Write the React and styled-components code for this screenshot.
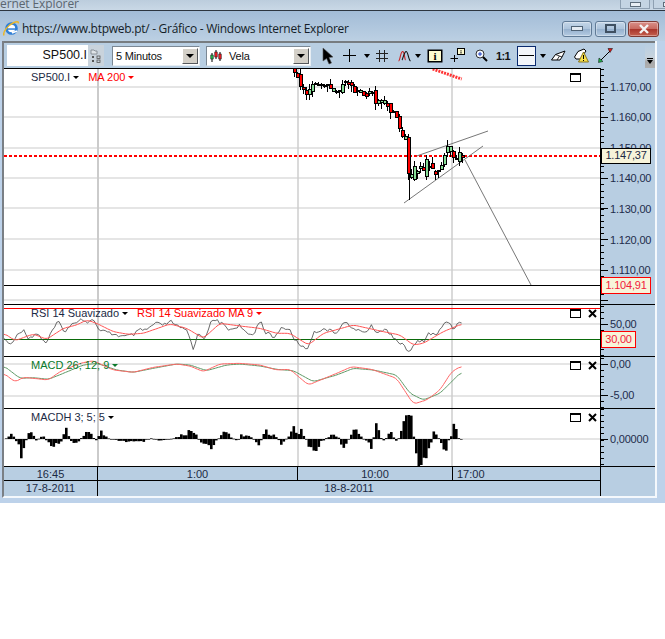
import styled, { createGlobalStyle } from 'styled-components'

const GlobalStyle = createGlobalStyle`
    html, body {
        margin: 0;
        padding: 0;
        background: #fff;
    }
`

const Page = styled.div`
    width: 665px;
    height: 639px;
    overflow: hidden;
    font-family: "Liberation Sans", Arial, sans-serif;
    color: #1b2a44;
`

const TopStrip = styled.div`
    height: 10px;
    display: flex;
    align-items: flex-start;
    overflow: hidden;
    background: linear-gradient(#bccddd, #c9d8e6);
`

const TopTitle = styled.div`
    font-family: "Open Sans", sans-serif;
    font-size: 12px;
    letter-spacing: -0.1px;
    line-height: 8px;
    color: #5b6670;
    flex: 1;
`

const TopButton = styled.div`
    width: 30px;
    height: 9px;
    flex: none;
    margin-right: ${p => p.$mr}px;
    box-sizing: border-box;
    border: 1px solid #8ea0b2;
    border-top: none;
    background: #c4d4e3;
    display: flex;
    justify-content: center;
    padding-top: 2px;

    &::after {
        content: "";
        width: 9px;
        height: 3px;
        border: 1px solid #5d6c7a;
        background: #e8eef4;
    }
`

const Window = styled.div`
    height: 492px;
    border-top: 1px solid #2c3540;
    background: #bdd2ea;
    display: flex;
    flex-direction: column;
`

const TitleBar = styled.div`
    height: 30px;
    box-sizing: border-box;
    display: flex;
    align-items: center;
    padding: 5px 6px 0 3px;
    background: linear-gradient(#a2bcd7, #bcd0e3);
`

const TitleText = styled.div`
    flex: 1;
    margin-left: 3px;
    font-family: "Open Sans", sans-serif;
    font-size: 12px;
    letter-spacing: -0.28px;
    color: #141d28;
    white-space: nowrap;
`

const WindowButton = styled.div`
    width: ${p => p.$w}px;
    height: 16px;
    margin-left: ${p => p.$ml}px;
    box-sizing: border-box;
    border: 1px solid ${p => (p.$red ? '#7d3a34' : '#5f7a96')};
    border-radius: 3px;
    background: ${p => (p.$red
        ? 'linear-gradient(#d9918a 0%, #c96a60 48%, #a8352b 52%, #c5604f 100%)'
        : 'linear-gradient(#c4d6e8 0%, #adc4dc 48%, #96b1ce 52%, #b4cbe2 100%)')};
    box-shadow: inset 0 0 0 1px rgba(255, 255, 255, 0.35);
    display: flex;
    align-items: center;
    justify-content: center;
`

const Content = styled.div`
    width: 655px;
    margin-left: 2px;
    box-sizing: border-box;
    border-left: 2px solid #7a7f85;
    border-right: 2px solid #f4f8fc;
    border-bottom: 2px solid #f4f8fc;
    display: flex;
    flex-direction: column;
`

const Toolbar = styled.div`
    height: 25px;
    border-top: 2px solid #777c80;
    background: #b8cee2;
    display: flex;
    align-items: center;
    padding-left: 3px;
`

const SearchBox = styled.div`
    width: 81px;
    height: 21px;
    box-sizing: border-box;
    background: #fff;
    font-size: 12.5px;
    line-height: 21px;
    text-align: right;
    padding-right: 1px;
    color: #111;
`

const SearchButton = styled.div`
    width: 16px;
    height: 21px;
    margin-right: 8px;
    background: #c9d3dc;
    display: flex;
    align-items: center;
    justify-content: center;
`

const Combo = styled.div`
    width: ${p => p.$w}px;
    height: 20px;
    margin-right: 6px;
    box-sizing: border-box;
    border: 1px solid #7b8894;
    border-right-color: #e6edf3;
    border-bottom-color: #e6edf3;
    background: #fff;
    display: flex;
    align-items: center;
    padding-left: 3px;
    font-size: 11px;
    letter-spacing: -0.2px;
    color: #111;
`

const ComboText = styled.span`
    flex: 1;
    margin-left: ${p => p.$ml || 0}px;
`

const ComboArrow = styled.div`
    width: 16px;
    height: 16px;
    margin-right: 1px;
    box-sizing: border-box;
    background: #d4d0c8;
    border: 1px solid;
    border-color: #fff #55585c #55585c #fff;
    display: flex;
    align-items: center;
    justify-content: center;

    &::after {
        content: "";
        border-left: 4px solid transparent;
        border-right: 4px solid transparent;
        border-top: 4px solid #000;
    }
`

const ToolSlot = styled.div`
    width: ${p => p.$w}px;
    margin-left: ${p => p.$ml || 0}px;
    height: 22px;
    flex: none;
    display: flex;
    align-items: center;
    justify-content: center;
`

const ToolChevron = styled.div`
    border-left: 3.5px solid transparent;
    border-right: 3.5px solid transparent;
    border-top: 4px solid #000;
`

const InfoBox = styled.div`
    width: 12px;
    height: 10px;
    border: 1px solid #000;
    box-shadow: 0 0 0 0.5px #000;
    background: #fdfbd0;
    font-family: "Liberation Serif", serif;
    font-weight: bold;
    font-size: 11px;
    line-height: 10px;
    text-align: center;
    color: #000;
`

const OneToOne = styled.span`
    font-size: 11px;
    font-weight: bold;
    letter-spacing: -0.6px;
    color: #111;
`

const LineBox = styled.div`
    width: 19px;
    height: 20px;
    margin-left: 5px;
    flex: none;
    box-sizing: border-box;
    border: 1px solid #0a2a6e;
    background: #f3f6fa;
    display: flex;
    align-items: center;
    justify-content: center;

    &::after {
        content: "";
        width: 15px;
        height: 1px;
        background: #000;
    }
`

const OverflowButton = styled.div`
    width: 10px;
    height: 24px;
    margin-left: auto;
    background: linear-gradient(#b8cee2 0%, #c7d3dd 55%, #a8a8a8 75%, #b0b0b0 100%);
    display: flex;
    flex-direction: column;
    align-items: center;
    justify-content: flex-end;
    padding-bottom: 4px;
    box-sizing: border-box;

    &::before {
        content: "";
        width: 6px;
        height: 1px;
        background: #000;
        margin-bottom: 1px;
    }

    &::after {
        content: "";
        border-left: 3px solid transparent;
        border-right: 3px solid transparent;
        border-top: 4px solid #000;
    }
`

const Pane = styled.div`
    height: ${p => p.$h}px;
    display: flex;
    box-sizing: border-box;
    border-top: ${p => (p.$line ? '1px solid #000' : 'none')};
`

const Plot = styled.div`
    width: 596px;
    flex: none;
    position: relative;
    box-sizing: border-box;
    background: #fff;
    border-top: ${p => (p.$line ? '1px solid #000' : 'none')};

    svg {
        display: block;
    }
`

const Legend = styled.div`
    position: absolute;
    left: 27px;
    top: 1px;
    display: flex;
    gap: ${p => p.$gap || 9}px;
    font-size: 11px;
    line-height: 14px;
    white-space: nowrap;
`

const LegendItem = styled.span`
    display: flex;
    align-items: center;
    gap: 3px;
    color: ${p => p.$color || '#1b2a44'};

    &::after {
        content: "";
        border-left: 3.5px solid transparent;
        border-right: 3.5px solid transparent;
        border-top: 3.5px solid ${p => p.$color || '#000'};
    }
`

const PaneIcons = styled.div`
    position: absolute;
    right: 3px;
    top: 4px;
    display: flex;
    gap: 7px;
`

const Axis = styled.div`
    flex: 1;
    position: relative;
    border-left: 1px solid #000;
    background: #b8cee2;
    font-size: 11px;
    letter-spacing: -0.2px;
    color: #1e2c4c;
`

const TickLayer = styled.svg`
    position: absolute;
    left: 0;
    top: 0;
    display: block;
`

const AxisLabels = styled.div`
    position: relative;
    padding: ${p => p.$top}px 0 0 9px;
    display: flex;
    flex-direction: column;
`

const AxisLabel = styled.div`
    height: ${p => p.$step}px;
    line-height: ${p => p.$step}px;
    white-space: nowrap;
`

const ValueTag = styled.div`
    position: absolute;
    left: 0;
    top: ${p => p.$top}px;
    width: ${p => p.$w}px;
    height: ${p => p.$h}px;
    box-sizing: border-box;
    border: ${p => (p.$red ? '1.5px solid #f00' : '1px solid #000')};
    background: #f7f4da;
    color: ${p => (p.$red ? '#f2203a' : '#1b2a44')};
    font-size: 11px;
    line-height: ${p => p.$h - 3}px;
    text-align: center;
    white-space: nowrap;
`

const ScaleRow = styled.div`
    height: 15px;
    display: flex;
    box-sizing: border-box;
    border-top: ${p => (p.$line ? '1px solid #000' : 'none')};
    background: #b8cee2;
    font-size: 11px;
    line-height: 14px;
`

const ScaleCells = styled.div`
    width: 596px;
    flex: none;
    display: flex;
    box-sizing: border-box;
    border-bottom: ${p => (p.$under ? '1px solid #000' : 'none')};
`

const ScaleCell = styled.div`
    width: ${p => p.$w}px;
    flex: ${p => (p.$w ? 'none' : 1)};
    box-sizing: border-box;
    border-right: ${p => (p.$sep ? '1px solid #000' : 'none')};
    text-align: ${p => (p.$left ? 'left' : 'center')};
    padding-left: ${p => (p.$left ? 4 : 0)}px;
`

const ScaleEnd = styled.div`
    flex: 1;
    border-left: 1px solid #000;
`

const interp = (pts, x) => {
    if (x <= pts[0][0]) return pts[0][1]
    for (let i = 1; i < pts.length; i++) {
        if (x <= pts[i][0]) {
            const [x0, y0] = pts[i - 1]
            const [x1, y1] = pts[i]
            return y0 + ((y1 - y0) * (x - x0)) / (x1 - x0)
        }
    }
    return pts[pts.length - 1][1]
}

const noise = (i) => {
    const v = Math.sin(i * 12.9898) * 43758.5453
    return v - Math.floor(v)
}

// zoomed crop coordinates back to page coordinates
const fromCrop = (pts, ox, oy) => pts.map(([x, y]) => [ox + x / 3, oy + y / 3])
const toPoints = (pts) => pts.map(([x, y]) => `${x.toFixed(1)},${y.toFixed(1)}`).join(' ')

// resample a hand read line, then soften it with a short moving average
const smooth = (pts, win = 2) => {
    const first = pts[0][0]
    const last = pts[pts.length - 1][0]
    const samples = []
    for (let x = first; x <= last; x += 1.5) samples.push([x, interp(pts, x)])
    return samples.map(([x], i) => {
        const part = samples.slice(Math.max(0, i - win), i + win + 1)
        return [x, part.reduce((sum, s) => sum + s[1], 0) / part.length]
    })
}

// same line with the small jagged moves of a raw indicator
const jagged = (pts, amount) => {
    const out = []
    let i = 0
    for (let x = pts[0][0]; x <= pts[pts.length - 1][0]; x += 2.2, i++) {
        out.push([x, interp(pts, x) + (noise(i + 3) - 0.5) * amount])
    }
    return out
}

const pricePath = fromCrop([
    [40, 30], [50, 45], [58, 78], [72, 95], [80, 108], [90, 80], [105, 75], [125, 70], [140, 75],
    [150, 85], [165, 90], [175, 95], [183, 65], [200, 65], [215, 75], [225, 95], [240, 95],
    [250, 105], [265, 100], [272, 90], [282, 110], [285, 135], [300, 120], [320, 130], [328, 155],
    [345, 160], [352, 175], [362, 230], [380, 232], [382, 340], [390, 360], [405, 320], [420, 330],
    [430, 345], [440, 300], [452, 325], [465, 345], [480, 330], [490, 290], [500, 265], [515, 275],
    [520, 305], [532, 285], [545, 285],
], 280, 60)

const rsiBlack = [
    ...fromCrop([
        [12, 115], [25, 130], [40, 130], [55, 95], [75, 92], [85, 115], [110, 100], [140, 130], [155, 95],
        [175, 65], [195, 95], [215, 75], [240, 55], [260, 65], [285, 60], [295, 90], [330, 100], [370, 110],
        [400, 105], [420, 90], [440, 90], [465, 70], [490, 75], [515, 65], [540, 85], [560, 90], [580, 145],
        [595, 100], [615, 115], [630, 70], [650, 60], [690, 90],
    ], 0, 300),
    ...fromCrop([
        [0, 75], [15, 100], [40, 105], [60, 58], [75, 95], [105, 115], [120, 85], [145, 85], [165, 120],
        [200, 150], [220, 100], [250, 85], [290, 100], [305, 70], [325, 70], [340, 90], [385, 95], [390, 75],
        [410, 95], [440, 90], [475, 125], [510, 155], [530, 125], [550, 125], [565, 100], [590, 105],
        [620, 60], [640, 85], [655, 68], [665, 72],
    ], 240, 300),
]

const rsiRed = [
    ...fromCrop([
        [12, 100], [45, 122], [100, 102], [140, 118], [190, 85], [230, 75], [260, 60], [290, 70], [340, 95],
        [385, 103], [430, 100], [510, 72], [560, 85], [610, 115], [660, 70],
    ], 0, 300),
    ...fromCrop([
        [0, 78], [60, 85], [110, 100], [150, 100], [205, 135], [250, 100], [340, 75], [430, 95], [480, 105],
        [520, 135], [550, 130], [610, 95], [665, 72],
    ], 240, 300),
]

const macdGreen = [
    ...fromCrop([
        [12, 198], [60, 235], [100, 233], [145, 238], [190, 220], [250, 195], [290, 190], [350, 210],
        [400, 217], [460, 205], [530, 192], [570, 195], [620, 212], [680, 195],
    ], 0, 300),
    ...fromCrop([
        [0, 192], [60, 198], [110, 208], [160, 212], [220, 245], [290, 225], [340, 205], [400, 210],
        [470, 225], [510, 280], [550, 300], [600, 280], [665, 215],
    ], 240, 300),
]

const macdRed = [
    ...fromCrop([
        [12, 220], [45, 246], [70, 232], [100, 235], [145, 240], [180, 215], [240, 190], [280, 182],
        [340, 210], [400, 217], [460, 202], [530, 192], [570, 198], [610, 215], [660, 192],
    ], 0, 300),
    ...fromCrop([
        [0, 190], [60, 195], [110, 210], [150, 208], [205, 255], [290, 220], [335, 200], [395, 208],
        [470, 235], [520, 312], [560, 300], [600, 270], [635, 215], [665, 198],
    ], 240, 300),
]

const histPath = [
    ...[
        [12, 0], [30, 15], [45, -5], [60, -40], [70, -15], [88, 25], [105, -5], [125, 10], [150, -25],
        [175, -20], [195, 28], [215, -18], [235, -3], [260, 22], [285, -5], [300, 20], [320, 3], [340, -3],
        [385, -8], [420, -10], [450, 3], [475, -6], [520, 3], [580, 30], [595, -10], [630, -22], [670, 20],
        [710, -7],
    ].map(([x, h]) => [x / 3, h / 3]),
    ...[
        [0, 10], [15, 15], [35, 0], [55, -18], [70, 28], [100, 12], [122, -15], [160, 30], [180, 25],
        [215, -40], [240, -10], [265, 10], [290, 10], [305, -25], [340, 25], [365, 3], [390, -25], [405, 35],
        [425, -8], [450, 20], [468, -10], [485, 40], [507, 80], [530, -68], [560, -48], [580, 25], [612, -35],
        [640, 40], [655, -5], [665, 0],
    ].map(([x, h]) => [240 + x / 3, h / 3]),
]

const buildCandles = () => {
    const out = []
    for (let x = 294, i = 0; x < 463; x += 3, i++) {
        const swing = x > 410 ? 9 : 5
        const close = interp(pricePath, x) + (noise(i + 21) - 0.5) * swing
        const open = interp(pricePath, x - 3) + (noise(i) - 0.5) * swing
        const top = Math.min(open, close)
        const bottom = Math.max(open, close)
        out.push({
            x: Math.round(x) + 0.5,
            top: Math.round(top) + 0.5,
            height: Math.max(Math.round(bottom - top), 1),
            high: top - noise(i + 50) * 6,
            low: bottom + noise(i + 90) * 7,
            up: close < open,
        })
    }
    return out
}

const candles = buildCandles()

const histBars = []
for (let x = 5, i = 0; x < 462; x += 2.5, i++) {
    const v = interp(histPath, x)
    histBars.push({ x, v: v * (0.55 + noise(i + 7) * 0.9) })
}

const GridLines = ({ top, height, rows }) => (
    <>
        {[98, 298, 452].map((x) => (
            <line key={x} x1={x} x2={x} y1={top} y2={top + height} stroke="#cbcbcb" strokeWidth={x === 98 ? 2 : 1.4} />
        ))}
        {rows.map((y) => (
            <line key={y} x1={4} x2={600} y1={y} y2={y} stroke="#cbcbcb" strokeWidth="1.2" />
        ))}
    </>
)

const ChartSvg = ({ top, height, children }) => (
    <svg width="596" height={height} viewBox={`4 ${top} 596 ${height}`}>
        {children}
    </svg>
)

const Ticks = ({ top, height, majors, step, minorFrom }) => {
    const minors = []
    for (let y = minorFrom; y < top + height; y += step) minors.push(y)
    return (
        <TickLayer width="12" height={height} viewBox={`0 ${top} 12 ${height}`}>
            {minors.map((y) => (
                <line key={y} x1="0" x2="3" y1={y} y2={y} stroke="#000" strokeWidth="1" shapeRendering="crispEdges" />
            ))}
            {majors.map((y) => (
                <line key={y} x1="0" x2="7" y1={y} y2={y} stroke="#000" strokeWidth="1" shapeRendering="crispEdges" />
            ))}
        </TickLayer>
    )
}

const RestoreIcon = () => (
    <svg width="11" height="9" viewBox="0 0 11 9">
        <rect x="0.5" y="0.5" width="10" height="8" fill="#fff" stroke="#000" />
        <rect x="0" y="0" width="11" height="2" fill="#000" />
    </svg>
)

const CloseIcon = () => (
    <svg width="9" height="9" viewBox="0 0 9 9">
        <path d="M1 1 L8 8 M8 1 L1 8" stroke="#000" strokeWidth="2" />
    </svg>
)

const IeLogo = () => (
    <svg width="16" height="17" viewBox="0 0 16 17">
        <circle cx="8.5" cy="8.5" r="5" fill="#fff" stroke="#2f7fd6" strokeWidth="2.6" />
        <path d="M4 8.3 H13.5 V9.8 H4 Z" fill="#2f7fd6" />
        <path d="M9 13 L14 11" stroke="#fff" strokeWidth="1.6" />
        <path d="M1 15.5 C-0.5 12 5 5 11 2.5 C13.5 1.4 15.6 1.3 15.4 3.4" fill="none" stroke="#e8b72c" strokeWidth="1.5" />
    </svg>
)

const TreeIcon = () => (
    <svg width="12" height="14" viewBox="0 0 12 14">
        <path d="M1 1 H4 L5 2 H7 V5 H1 Z" fill="#dfe4e8" stroke="#7a8288" strokeWidth="0.8" />
        <rect x="2" y="7" width="2" height="2" fill="#555" />
        <rect x="7" y="7" width="3" height="2.4" fill="none" stroke="#555" strokeWidth="0.8" />
        <rect x="2" y="11" width="2" height="2" fill="#555" />
        <rect x="7" y="11" width="3" height="2.4" fill="none" stroke="#555" strokeWidth="0.8" />
    </svg>
)

const CandleIcon = () => (
    <svg width="12" height="14" viewBox="0 0 12 14">
        <path d="M2 4 V13 M6 1 V10 M10 3 V12" stroke="#000" strokeWidth="1" />
        <rect x="0.8" y="6" width="2.4" height="4" fill="#22b14c" stroke="#000" strokeWidth="0.5" />
        <rect x="4.8" y="3" width="2.4" height="5" fill="#ed1c24" stroke="#000" strokeWidth="0.5" />
        <rect x="8.8" y="5" width="2.4" height="5" fill="#ed1c24" stroke="#000" strokeWidth="0.5" />
    </svg>
)

const ToolIcon = ({ name }) => {
    switch (name) {
        case 'cursor':
            return (
                <svg width="12" height="18" viewBox="0 0 12 18">
                    <path d="M1 1 L11 10 L7 10.5 L9.5 16 L7 17 L4.6 11.5 L1 14 Z" fill="#000" stroke="#555" strokeWidth="0.6" />
                </svg>
            )
        case 'plus':
            return (
                <svg width="13" height="13" viewBox="0 0 13 13">
                    <path d="M6.5 0 V13 M0 6.5 H13" stroke="#000" strokeWidth="1" />
                </svg>
            )
        case 'grid':
            return (
                <svg width="12" height="12" viewBox="0 0 12 12">
                    <path d="M3.5 0 V12 M8.5 0 V12 M0 3.5 H12 M0 8.5 H12" stroke="#222" strokeWidth="1" />
                </svg>
            )
        case 'wave':
            return (
                <svg width="13" height="12" viewBox="0 0 13 12">
                    <path d="M0.5 11 C2 11 2.5 2 4.5 1.5 C6.5 1 6.5 9 7.5 10" fill="none" stroke="#c22" strokeWidth="1.1" />
                    <path d="M4 10 C5 9 6 2 8 1.5 C10 1 10.5 10 12.5 11" fill="none" stroke="#111" strokeWidth="1.1" />
                </svg>
            )
        case 'plusInfo':
            return (
                <svg width="15" height="15" viewBox="0 0 15 15">
                    <path d="M4.5 7 V14 M0.5 10.5 H8" stroke="#000" strokeWidth="1" />
                    <rect x="7.5" y="0.5" width="7" height="6" fill="#fdfbd0" stroke="#000" />
                    <path d="M11 2 V2.8 M11 3.5 V5.5" stroke="#000" strokeWidth="1" />
                </svg>
            )
        case 'zoom':
            return (
                <svg width="13" height="13" viewBox="0 0 13 13">
                    <path d="M7.5 7.5 L12 12" stroke="#000" strokeWidth="2" />
                    <circle cx="5" cy="5" r="4" fill="#f4f8fc" stroke="#333" strokeWidth="1" />
                    <path d="M5 3 V7 M3 5 H7" stroke="#1a3fc4" strokeWidth="1" />
                </svg>
            )
        case 'eraser':
            return (
                <svg width="15" height="11" viewBox="0 0 15 11">
                    <path d="M0.5 10 L4.5 4.5 L14 1 L11 7 L9 10 Z" fill="#fff" stroke="#000" strokeWidth="1" />
                    <path d="M4.5 4.5 L8.5 6 L11 7 M8.5 6 L6 10" fill="none" stroke="#000" strokeWidth="0.8" />
                </svg>
            )
        case 'warning':
            return (
                <svg width="15" height="15" viewBox="0 0 15 15">
                    <path d="M0.5 9 L4 3.5 L10 1 L12 3 L9 7 L7 11 L2 11 Z" fill="#fff" stroke="#000" strokeWidth="1" />
                    <path d="M9.5 4 L14.5 14 H4.5 Z" fill="#f7e04a" stroke="#7d6a12" strokeWidth="0.9" />
                    <path d="M9.5 7 V11 M9.5 12 V13" stroke="#000" strokeWidth="1" />
                </svg>
            )
        case 'arrow':
            return (
                <svg width="15" height="15" viewBox="0 0 15 15">
                    <path d="M3 12 L12 3" stroke="#000" strokeWidth="1" />
                    <path d="M10 0.5 L14.5 0.5 L12 4.5 Z" fill="#e01818" stroke="#000" strokeWidth="0.5" />
                    <path d="M0.5 14.5 L1 10 L5 13.5 Z" fill="#22b14c" stroke="#000" strokeWidth="0.5" />
                </svg>
            )
        default:
            return null
    }
}

const App = () => {
    return (
        <Page>
            <GlobalStyle />
            <TopStrip>
                <TopTitle>ernet Explorer</TopTitle>
                <TopButton $mr={3} />
                <TopButton $mr={-18} />
            </TopStrip>
            <Window>
                <TitleBar>
                    <IeLogo />
                    <TitleText>https://www.btpweb.pt/ - Gráfico - Windows Internet Explorer</TitleText>
                    <WindowButton $w={30} $ml={0}>
                        <svg width="12" height="5"><rect x="0.5" y="0.5" width="11" height="4" fill="#e4ebf2" stroke="#4f6275" /></svg>
                    </WindowButton>
                    <WindowButton $w={31} $ml={3}>
                        <svg width="11" height="9"><rect x="1" y="1" width="9" height="7" fill="none" stroke="#3f5062" strokeWidth="2" /></svg>
                    </WindowButton>
                    <WindowButton $w={31} $ml={2} $red>
                        <svg width="12" height="10"><path d="M2 1 L10 9 M10 1 L2 9" stroke="#f4f4f4" strokeWidth="2.4" /></svg>
                    </WindowButton>
                </TitleBar>
                <Content>
                    <Toolbar>
                        <SearchBox>SP500.I</SearchBox>
                        <SearchButton><TreeIcon /></SearchButton>
                        <Combo $w={88}>
                            <ComboText>5 Minutos</ComboText>
                            <ComboArrow />
                        </Combo>
                        <Combo $w={105}>
                            <CandleIcon />
                            <ComboText $ml={7}>Vela</ComboText>
                            <ComboArrow />
                        </Combo>
                        <ToolSlot $w={22}><ToolIcon name="cursor" /></ToolSlot>
                        <ToolSlot $w={20}><ToolIcon name="plus" /></ToolSlot>
                        <ToolSlot $w={16}><ToolChevron /></ToolSlot>
                        <ToolSlot $w={14}><ToolIcon name="grid" /></ToolSlot>
                        <ToolSlot $w={20} $ml={5}><ToolIcon name="wave" /></ToolSlot>
                        <ToolSlot $w={8}><ToolChevron /></ToolSlot>
                        <ToolSlot $w={22} $ml={2}><InfoBox>i</InfoBox></ToolSlot>
                        <ToolSlot $w={22}><ToolIcon name="plusInfo" /></ToolSlot>
                        <ToolSlot $w={26}><ToolIcon name="zoom" /></ToolSlot>
                        <ToolSlot $w={18}><OneToOne>1:1</OneToOne></ToolSlot>
                        <LineBox />
                        <ToolSlot $w={14}><ToolChevron /></ToolSlot>
                        <ToolSlot $w={16}><ToolIcon name="eraser" /></ToolSlot>
                        <ToolSlot $w={20} $ml={5}><ToolIcon name="warning" /></ToolSlot>
                        <ToolSlot $w={20} $ml={4}><ToolIcon name="arrow" /></ToolSlot>
                        <OverflowButton />
                    </Toolbar>

                    <Pane $h={236}>
                        <Plot $line>
                            <ChartSvg top={69} height={235}>
                                <GridLines top={69} height={235} rows={[87, 117, 148, 178, 208, 239, 270, 300]} />
                                <line x1="4" x2="600" y1="285" y2="285" stroke="#000" strokeWidth="1" shapeRendering="crispEdges" />
                                <line x1="4" x2="600" y1="156" y2="156" stroke="#f00" strokeWidth="2" strokeDasharray="3 2" />
                                <line x1="432.7" y1="69" x2="461.7" y2="79" stroke="#f33" strokeWidth="3" strokeDasharray="2 1" />
                                <line x1="416.7" y1="156" x2="488" y2="131" stroke="#777" strokeWidth="1" />
                                <line x1="404" y1="203" x2="483" y2="146" stroke="#777" strokeWidth="1" />
                                <line x1="465" y1="160" x2="531" y2="285" stroke="#777" strokeWidth="1" />
                                <line x1="409.5" y1="150" x2="409.5" y2="200" stroke="#000" strokeWidth="1" />
                                {candles.map((c) => (
                                    <g key={c.x} shapeRendering="crispEdges">
                                        <line x1={c.x} x2={c.x} y1={c.high} y2={c.low} stroke="#000" strokeWidth="1" />
                                        <rect
                                            x={c.x - 1.5}
                                            y={c.top}
                                            width="3"
                                            height={c.height}
                                            fill={c.up ? '#86dc96' : '#f00'}
                                            stroke="#000"
                                            strokeWidth="1"
                                        />
                                    </g>
                                ))}
                            </ChartSvg>
                            <Legend>
                                <LegendItem>SP500.I</LegendItem>
                                <LegendItem $color="#f00">MA 200</LegendItem>
                            </Legend>
                            <PaneIcons>
                                <RestoreIcon />
                                <svg width="9" height="9" />
                            </PaneIcons>
                        </Plot>
                        <Axis>
                            <Ticks top={68} height={235} majors={[87, 117, 148, 178, 208, 239, 270, 300]} step={6.1} minorFrom={69} />
                            <AxisLabels $top={3.7}>
                                {['1.170,00', '1.160,00', '1.150,00', '1.140,00', '1.130,00', '1.120,00', '1.110,00'].map((t) => (
                                    <AxisLabel key={t} $step={30.6}>{t}</AxisLabel>
                                ))}
                            </AxisLabels>
                            <ValueTag $top={80} $w={50} $h={16}>1.147,37</ValueTag>
                            <ValueTag $top={209} $w={50} $h={17} $red>1.104,91</ValueTag>
                        </Axis>
                    </Pane>

                    <Pane $h={52} $line>
                        <Plot>
                            <ChartSvg top={305} height={51}>
                                <GridLines top={305} height={51} rows={[324]} />
                                <line x1="4" x2="600" y1="308" y2="308" stroke="#f00" strokeWidth="1" shapeRendering="crispEdges" />
                                <line x1="4" x2="600" y1="339" y2="339" stroke="#0a6a0a" strokeWidth="1" shapeRendering="crispEdges" />
                                <polyline points={toPoints(jagged(rsiBlack, 3.5))} fill="none" stroke="#444" strokeWidth="0.8" />
                                <polyline points={toPoints(smooth(rsiRed))} fill="none" stroke="#f55" strokeWidth="1" />
                            </ChartSvg>
                            <Legend>
                                <LegendItem>RSI 14 Suavizado</LegendItem>
                                <LegendItem $color="#f00">RSI 14 Suavizado MA 9</LegendItem>
                            </Legend>
                            <PaneIcons>
                                <RestoreIcon />
                                <CloseIcon />
                            </PaneIcons>
                        </Plot>
                        <Axis>
                            <Ticks top={305} height={51} majors={[324, 339]} step={6.2} minorFrom={306} />
                            <AxisLabels $top={12}>
                                <AxisLabel $step={14}>50,00</AxisLabel>
                            </AxisLabels>
                            <ValueTag $top={26} $w={35} $h={17} $red>30,00</ValueTag>
                        </Axis>
                    </Pane>

                    <Pane $h={52} $line>
                        <Plot>
                            <ChartSvg top={357} height={51}>
                                <GridLines top={357} height={51} rows={[364, 396]} />
                                <polyline points={toPoints(smooth(macdGreen))} fill="none" stroke="#5f9a68" strokeWidth="1" />
                                <polyline points={toPoints(smooth(macdRed))} fill="none" stroke="#f66" strokeWidth="1" />
                            </ChartSvg>
                            <Legend>
                                <LegendItem $color="#0a7a2a">MACD 26; 12; 9</LegendItem>
                            </Legend>
                            <PaneIcons>
                                <RestoreIcon />
                                <CloseIcon />
                            </PaneIcons>
                        </Plot>
                        <Axis>
                            <Ticks top={357} height={51} majors={[364, 395]} step={6.2} minorFrom={358} />
                            <AxisLabels $top={0}>
                                <AxisLabel $step={14}>0,00</AxisLabel>
                                <AxisLabel $step={17}></AxisLabel>
                                <AxisLabel $step={14}>-5,00</AxisLabel>
                            </AxisLabels>
                        </Axis>
                    </Pane>

                    <Pane $h={58} $line>
                        <Plot>
                            <ChartSvg top={409} height={57}>
                                <GridLines top={409} height={57} rows={[439]} />
                                {histBars.map((b) => (
                                    <rect
                                        key={b.x}
                                        x={b.x}
                                        y={b.v > 0 ? 439 - b.v : 439}
                                        width="2.6"
                                        height={Math.max(Math.abs(b.v), 0.6)}
                                        fill="#000"
                                    />
                                ))}
                            </ChartSvg>
                            <Legend>
                                <LegendItem>MACDH 3; 5; 5</LegendItem>
                            </Legend>
                            <PaneIcons>
                                <RestoreIcon />
                                <CloseIcon />
                            </PaneIcons>
                        </Plot>
                        <Axis>
                            <Ticks top={409} height={57} majors={[439]} step={6.2} minorFrom={409} />
                            <AxisLabels $top={23}>
                                <AxisLabel $step={14}>0,00000</AxisLabel>
                            </AxisLabels>
                        </Axis>
                    </Pane>

                    <ScaleRow $line>
                        <ScaleCells $under>
                            <ScaleCell $w={94} $sep>16:45</ScaleCell>
                            <ScaleCell $w={200} $sep>1:00</ScaleCell>
                            <ScaleCell $w={155} $sep>10:00</ScaleCell>
                            <ScaleCell $left>17:00</ScaleCell>
                        </ScaleCells>
                        <ScaleEnd />
                    </ScaleRow>
                    <ScaleRow>
                        <ScaleCells>
                            <ScaleCell $w={94} $sep>17-8-2011</ScaleCell>
                            <ScaleCell>18-8-2011</ScaleCell>
                        </ScaleCells>
                        <ScaleEnd />
                    </ScaleRow>
                </Content>
            </Window>
        </Page>
    )
}

export default App
